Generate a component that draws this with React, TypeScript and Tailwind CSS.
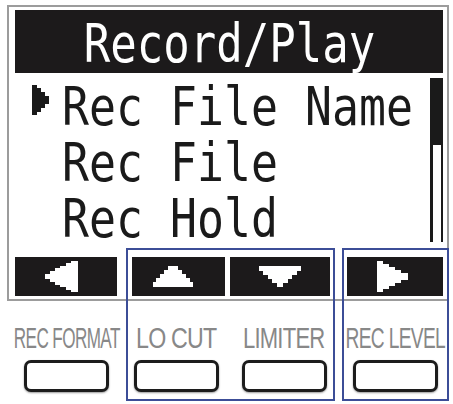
import React from "react";

const LCD = "font-['DejaVu_Sans_Mono','Liberation_Mono',monospace]";
const LABEL = "font-['Liberation_Sans',Arial,sans-serif]";

const Cursor: React.FC = () => (
  <svg width="17" height="30" viewBox="0 0 17 30" shapeRendering="crispEdges" className="mt-[6px] ml-[17px]" fill="#1a1a1a">
    <rect x="0" y="0" width="5" height="30" />
    <rect x="5" y="3" width="4" height="24" />
    <rect x="9" y="7" width="4" height="16" />
    <rect x="13" y="11" width="4" height="8" />
  </svg>
);

const ArrowLeft: React.FC = () => (
  <svg width="33" height="31" viewBox="0 0 33 31" shapeRendering="crispEdges" fill="#fff" className="mr-[9px]">
    <rect x="0" y="13" width="5" height="5" />
    <rect x="5" y="10" width="5" height="11" />
    <rect x="10" y="7" width="5" height="17" />
    <rect x="15" y="5" width="6" height="21" />
    <rect x="21" y="2" width="6" height="27" />
    <rect x="26" y="0" width="7" height="31" />
  </svg>
);

const ArrowRight: React.FC = () => (
  <svg width="31" height="31" viewBox="0 0 31 31" shapeRendering="crispEdges" fill="#fff" className="mr-[5px]">
    <rect x="0" y="0" width="6" height="31" />
    <rect x="6" y="3" width="6" height="25" />
    <rect x="12" y="6" width="6" height="19" />
    <rect x="18" y="9" width="6" height="13" />
    <rect x="24" y="12" width="7" height="7" />
  </svg>
);

const ArrowUp: React.FC = () => (
  <svg width="40" height="21" viewBox="0 0 40 21" shapeRendering="crispEdges" fill="#fff" className="mr-[11px]">
    <rect x="15" y="0" width="10" height="4" />
    <rect x="11" y="4" width="18" height="4" />
    <rect x="7" y="8" width="26" height="4" />
    <rect x="3" y="12" width="34" height="4" />
    <rect x="0" y="16" width="40" height="5" />
  </svg>
);

const ArrowDown: React.FC = () => (
  <svg width="42" height="21" viewBox="0 0 42 21" shapeRendering="crispEdges" fill="#fff">
    <rect x="0" y="0" width="42" height="5" />
    <rect x="4" y="5" width="34" height="4" />
    <rect x="9" y="9" width="24" height="4" />
    <rect x="13" y="13" width="16" height="4" />
    <rect x="18" y="17" width="6" height="4" />
  </svg>
);

const rows = ["Rec File Name", "Rec File", "Rec Hold"];

const keys = [
  { label: "REC FORMAT", cell: "w-[119px]", scale: "scale-x-[0.59]" },
  { label: "LO CUT", cell: "w-[100px]", scale: "scale-x-[0.8]" },
  { label: "LIMITER", cell: "w-[116px]", scale: "scale-x-[0.76]" },
  { label: "REC LEVEL", cell: "w-[107px]", scale: "scale-x-[0.66]" },
];

export default function App() {
  return (
    <div className="relative w-[453px] h-[404px] bg-white overflow-hidden">
      {/* LCD screen */}
      <div className="mt-[5px] ml-[7px] w-[442px] h-[296px] border-2 border-[#9c9c9c] pt-[3px] pb-[3px] pl-[6px] pr-[4px] flex flex-col overflow-hidden">
        <div className="h-[63px] bg-[#1c1a1b] flex items-center justify-center overflow-hidden">
          <span className={`${LCD} block mt-[4px] text-[53px] leading-none text-white whitespace-nowrap scale-x-[0.83]`}>
            Record/Play
          </span>
        </div>

        <div className="h-[184px] flex">
          <div className="flex-1 min-w-0 flex flex-col pt-[6px] overflow-hidden">
            {rows.map((r, i) => (
              <div key={r} className="h-[56px] flex">
                <div className="w-[47px] shrink-0">{i === 0 && <Cursor />}</div>
                <span className={`${LCD} block text-[53px] leading-[56px] text-[#1a1a1a] whitespace-nowrap scale-x-[0.846] origin-left`}>
                  {r}
                </span>
              </div>
            ))}
          </div>
          <div className="mt-[5px] h-[164px] w-[13px] border-l-[3px] border-r-[2px] border-[#1a1a1a]">
            <div className="h-[67px] bg-[#1a1a1a]" />
          </div>
        </div>

        <div className="h-[39px] flex">
          <div className="w-[102px] bg-[#1c1a1b] flex items-center justify-center">
            <ArrowLeft />
          </div>
          <div className="ml-[15px] w-[93px] bg-[#1c1a1b] flex items-center justify-center">
            <ArrowUp />
          </div>
          <div className="ml-[5px] w-[100px] bg-[#1c1a1b] flex items-center justify-center">
            <ArrowDown />
          </div>
          <div className="ml-[17px] w-[96px] bg-[#1c1a1b] flex items-center justify-center">
            <ArrowRight />
          </div>
        </div>
      </div>

      {/* function keys */}
      <div className="mt-[23px] pl-[7px] flex">
        {keys.map((k) => (
          <div key={k.label} className={`${k.cell} flex flex-col items-center`}>
            <span className={`${LABEL} ${k.scale} block text-[29px] leading-[29px] tracking-[-1px] text-[#888888] whitespace-nowrap`}>
              {k.label}
            </span>
            <div className="mt-[7px] w-[85px] h-[32px] rounded-[7px] border-[3px] border-[#1c1c1c] bg-white shadow-[0_1px_2px_rgba(0,0,0,0.4)]" />
          </div>
        ))}
      </div>

      {/* highlight boxes */}
      <div className="absolute top-[248px] left-[126px] w-[209px] h-[153px] border-2 border-[#3c4d97]" />
      <div className="absolute top-[248px] left-[342px] w-[107px] h-[153px] border-2 border-[#3c4d97]" />
    </div>
  );
}
